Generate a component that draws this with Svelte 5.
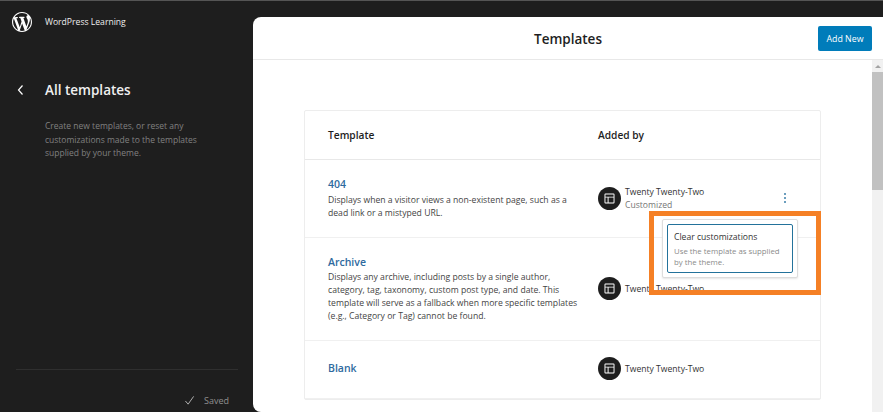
<script>
  const rows = [
    {
      name: '404',
      desc: 'Displays when a visitor views a non-existent page, such as a dead link or a mistyped URL.',
      customized: true
    },
    {
      name: 'Archive',
      desc: 'Displays any archive, including posts by a single author, category, tag, taxonomy, custom post type, and date. This template will serve as a fallback when more specific templates (e.g., Category or Tag) cannot be found.'
    },
    { name: 'Blank', desc: '' }
  ]
</script>

<div class="page">
  <aside class="sidebar">
    <div class="brand">
      <svg class="wp-logo" viewBox="0 0 20 20" width="20" height="20" aria-hidden="true">
        <path fill="#fff" d="M20 10c0-5.510-4.490-10-10-10C4.480 0 0 4.490 0 10c0 5.520 4.480 10 10 10 5.510 0 10-4.480 10-10zM7.780 15.370L4.370 6.220c.550-.020 1.170-.080 1.170-.080.500-.060.440-1.130-.060-1.110 0 0-1.450.110-2.370.110-.180 0-.370 0-.580-.010C4.120 2.690 6.890 1.050 10 1.050c2.320 0 4.430.870 6.020 2.300-.670-.110-1.630.390-1.630 1.560 0 .730.440 1.340.890 2.070.350.610.550 1.360.550 2.460 0 1.490-1.400 5-1.400 5l-3.030-8.370c.540-.020.820-.170.820-.170.500-.050.440-1.250-.060-1.220 0 0-1.440.120-2.380.120-.870 0-2.330-.120-2.330-.120-.500-.030-.560 1.200-.060 1.220l.920.080 1.260 3.410zM17.410 10c.240-.640.740-1.870.430-4.250.700 1.290 1.050 2.710 1.050 4.250 0 3.290-1.730 6.240-4.400 7.780.970-2.590 1.940-5.200 2.920-7.780zM6.100 18.090C3.120 16.650 1.110 13.530 1.110 10c0-1.300.230-2.480.720-3.580C3.250 10.300 4.670 14.200 6.100 18.090zm4.030-6.630l2.580 6.980c-.860.290-1.760.450-2.710.450-.790 0-1.570-.110-2.290-.330.810-2.380 1.620-4.740 2.420-7.100z" />
      </svg>
      <span class="site">WordPress Learning</span>
    </div>

    <div class="title-row">
      <svg class="back" viewBox="0 0 10 14" width="10" height="14" aria-hidden="true">
        <path d="M6.500 2.500 2.500 7l4 4.500" fill="none" stroke="#fff" stroke-width="1.200" />
      </svg>
      <h1>All templates</h1>
    </div>
    <p class="intro">Create new templates, or reset any customizations made to the templates supplied by your theme.</p>

    <div class="footer">
      <svg viewBox="0 0 12 12" width="11" height="11" aria-hidden="true">
        <path d="M1.500 6.500 4.500 10 10.500 1.500" fill="none" stroke="#bbb" stroke-width="1" />
      </svg>
      <span>Saved</span>
    </div>
  </aside>

  <main class="panel">
    <header class="panel-head">
      <h2>Templates</h2>
      <button class="add">Add New</button>
    </header>

    <div class="scroll-area">
      <div class="content">
        <div class="table">
          <div class="row head">
            <div class="col-a">Template</div>
            <div class="col-b">Added by</div>
          </div>
          {#each rows as row}
            <div class="row item" class:blank={!row.desc}>
              <div class="col-a">
                <a href="#top">{row.name}</a>
                {#if row.desc}<p>{row.desc}</p>{/if}
              </div>
              <div class="col-b author">
                <span class="avatar">
                  <svg viewBox="0 0 24 24" width="15" height="15" aria-hidden="true">
                    <path fill="#fff" d="M18.500 4h-13A1.500 1.500 0 0 0 4 5.500v13A1.500 1.500 0 0 0 5.500 20h13a1.500 1.500 0 0 0 1.500-1.500v-13A1.500 1.500 0 0 0 18.500 4zM5.500 5.500h13V9h-13V5.500zm0 13v-8H9v8H5.500zm13 0h-8v-8h8v8z" />
                  </svg>
                </span>
                <span class="author-text">
                  <span>Twenty Twenty-Two</span>
                  {#if row.customized}<small>Customized</small>{/if}
                </span>
                {#if row.customized}
                  <span class="dots"><i></i><i></i><i></i></span>
                  <div class="popover">
                    <button class="clear">
                      <b>Clear customizations</b>
                      <span>Use the template as supplied by the theme.</span>
                    </button>
                  </div>
                {/if}
              </div>
            </div>
          {/each}
        </div>
      </div>

      <div class="scrollbar">
        <span class="arrow"></span>
        <span class="thumb"></span>
      </div>
    </div>

    <div class="highlight"></div>
  </main>
</div>

<style>
  :global(body) {
    margin: 0;
    background: #1e1e1e;
  }

  .page {
    width: 883px;
    height: 412px;
    box-sizing: border-box;
    border-top: 1px solid #555;
    padding-top: 16px;
    display: flex;
    overflow: hidden;
    background: #1e1e1e;
    font-family: "Open Sans", "Noto Sans", sans-serif;
  }

  .sidebar {
    width: 253px;
    flex: none;
    margin-top: -17px;
    display: flex;
    flex-direction: column;
    color: #fff;
  }

  .brand {
    display: flex;
    align-items: center;
    height: 20px;
    margin-top: 12px;
    padding-left: 12px;
  }

  .wp-logo {
    flex: none;
  }

  .site {
    margin-left: 13px;
    font-size: 8.600px;
    color: #eee;
  }

  .title-row {
    display: flex;
    align-items: center;
    margin-top: 48px;
    padding-left: 16px;
  }

  .back {
    flex: none;
  }

  h1 {
    margin: 0 0 0 19px;
    font-size: 13.500px;
    line-height: 20px;
    font-weight: 600;
    color: #f0f0f0;
  }

  .intro {
    margin: 19px 0 0;
    padding-left: 45px;
    width: 165px;
    font-size: 8.500px;
    line-height: 13.500px;
    color: #808080;
  }

  .footer {
    margin: auto 15px 0 16px;
    height: 43px;
    border-top: 1px solid #2f2f2f;
    display: flex;
    align-items: flex-start;
    justify-content: flex-end;
    gap: 9px;
    padding: 25px 9px 0 0;
    box-sizing: border-box;
    font-size: 9px;
    line-height: 12px;
    color: #8f8f8f;
  }

  .panel {
    position: relative;
    flex: 1;
    min-width: 0;
    background: #fff;
    border-radius: 8px 0 0 8px;
    display: flex;
    flex-direction: column;
  }

  .panel-head {
    height: 42px;
    flex: none;
    border-bottom: 1px solid #e8e8e8;
    display: flex;
    align-items: center;
    justify-content: center;
    position: relative;
  }

  h2 {
    margin: 2px 0 0;
    font-size: 13.500px;
    font-weight: 600;
    color: #1e1e1e;
  }

  .add {
    position: absolute;
    right: 11px;
    top: 9px;
    width: 54px;
    height: 25px;
    padding: 0;
    border: none;
    border-radius: 2px;
    background: #007cba;
    color: #fff;
    font: 500 8.800px "Open Sans", sans-serif;
  }

  .scroll-area {
    flex: 1;
    min-height: 0;
    display: flex;
    overflow: hidden;
  }

  .content {
    flex: 1;
    padding: 50px 0 0 51px;
  }

  .table {
    width: 517px;
    box-sizing: border-box;
    border: 1px solid #ededed;
    border-radius: 2px;
  }

  .row {
    display: flex;
    border-bottom: 1px solid #f0f0f0;
    box-sizing: border-box;
  }

  .col-a {
    width: 270px;
    margin-left: 23px;
    flex: none;
  }

  .col-b {
    flex: 1;
    min-width: 0;
  }

  .head {
    height: 49px;
    align-items: center;
    font-size: 10.200px;
    font-weight: 600;
    color: #1e1e1e;
    border-bottom-color: #e8e8e8;
  }

  .item {
    padding: 17px 0;
    align-items: center;
  }

  .item.blank {
    padding: 0 0 2px;
    height: 58px;
  }

  a {
    display: block;
    font-size: 10.500px;
    line-height: 15px;
    font-weight: 600;
    color: #2e6a9e;
    text-decoration: none;
  }

  .item p {
    margin: 1.500px 0 0;
    width: 256px;
    font-size: 8.650px;
    line-height: 13px;
    color: #444;
  }

  .author {
    display: flex;
    align-items: center;
    position: relative;
  }

  .avatar {
    width: 23px;
    height: 23px;
    flex: none;
    border-radius: 50%;
    background: #1e1e1e;
    display: flex;
    align-items: center;
    justify-content: center;
  }

  .author-text {
    margin-left: 4px;
    padding-top: 2px;
    display: flex;
    flex-direction: column;
    font-size: 8.600px;
    line-height: 13.500px;
    color: #333;
  }

  small {
    font-size: 8.600px;
    color: #757575;
  }

  .dots {
    position: absolute;
    left: 186px;
    top: 50%;
    margin-top: -5px;
    display: flex;
    flex-direction: column;
    gap: 2px;
  }

  .dots i {
    width: 2px;
    height: 2px;
    background: #3a7ea8;
    border-radius: 50%;
  }

  .popover {
    position: absolute;
    left: 64px;
    top: 35px;
    z-index: 2;
    box-sizing: border-box;
    width: 136px;
    height: 59px;
    padding: 4px;
    background: #fff;
    border: 1px solid #ddd;
    border-radius: 2px;
    box-shadow: 0 1px 2px rgba(0, 0, 0, 0.1);
  }

  .clear {
    width: 100%;
    height: 100%;
    box-sizing: border-box;
    padding: 6px 6px 0;
    border: 1.500px solid #23729b;
    border-radius: 2px;
    background: #fff;
    display: flex;
    flex-direction: column;
    align-items: flex-start;
    text-align: left;
    font-family: inherit;
  }

  .clear b {
    font-size: 8.600px;
    line-height: 13px;
    font-weight: 400;
    color: #333;
  }

  .clear span {
    margin-top: 2px;
    font-size: 7.800px;
    line-height: 11px;
    color: #8a8a8a;
  }

  .scrollbar {
    width: 11px;
    flex: none;
    background: #f1f1f1;
    display: flex;
    flex-direction: column;
    align-items: center;
  }

  .arrow {
    margin-top: 5px;
    border: 3px solid transparent;
    border-top: none;
    border-bottom: 3px solid #a3a3a3;
  }

  .thumb {
    margin-top: 4px;
    width: 100%;
    height: 118px;
    background: #c1c1c1;
  }

  .highlight {
    position: absolute;
    left: 396px;
    top: 194px;
    width: 172px;
    height: 84px;
    box-sizing: border-box;
    border: 5px solid #f58025;
    z-index: 3;
    pointer-events: none;
  }
</style>
